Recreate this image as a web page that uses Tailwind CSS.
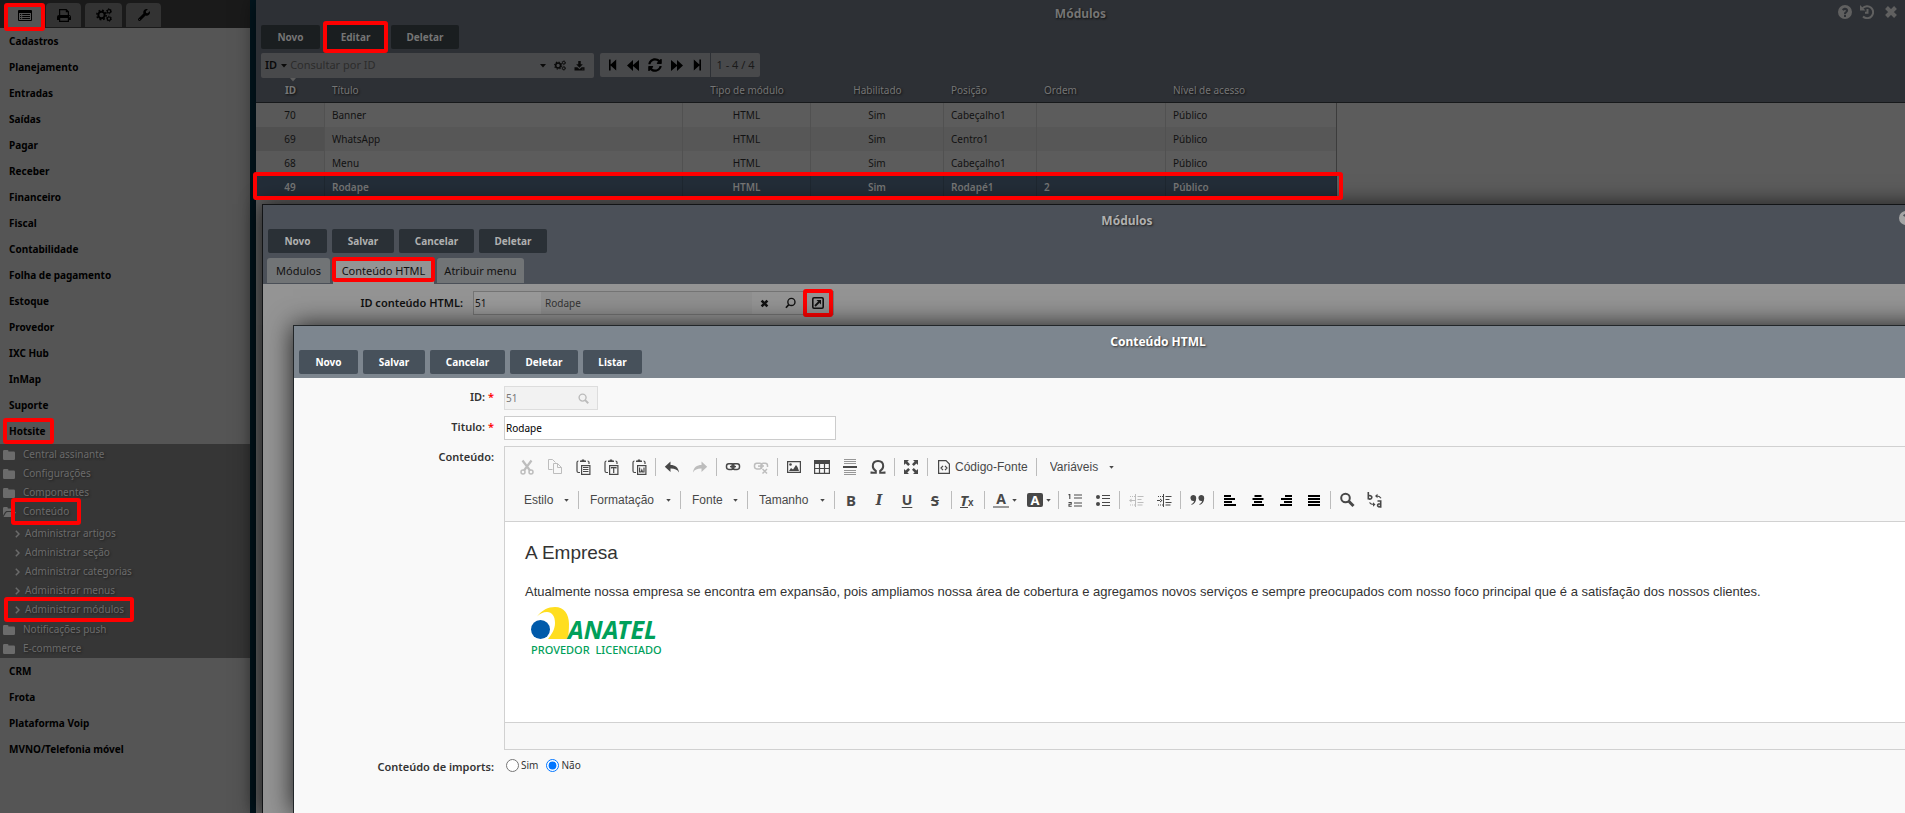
<!DOCTYPE html>
<html lang="pt-BR">
<head>
<meta charset="utf-8">
<title>Módulos</title>
<script src="https://cdn.jsdelivr.net/npm/@tailwindcss/browser@4"></script>
</head>
<body class="relative h-screen overflow-hidden bg-[#02161f] font-['Noto_Sans',sans-serif] text-[10px]">

<svg class="hidden" aria-hidden="true">
  <symbol id="caret" viewBox="0 0 6 4"><path d="M0 0h6L3 3.6z" fill="currentColor"/></symbol>
  <symbol id="list" viewBox="0 0 14 11"><path fill="currentColor" fill-rule="evenodd" d="M1 0h12a1 1 0 0 1 1 1v9a1 1 0 0 1-1 1H1a1 1 0 0 1-1-1V1a1 1 0 0 1 1-1zm0 3v7h12V3zM2 4h1.2v1H2zm2.2 0H12v1H4.200zM2 6h1.2v1H2zm2.200 0H12v1H4.200zM2 8h1.200v1H2zm2.200 0H12v1H4.200z"/></symbol>
  <symbol id="print" viewBox="0 0 14 13"><path fill="currentColor" fill-rule="evenodd" d="M2 0h7.500L12 2.500V6a2 2 0 0 1 2 2v3h-2v2H2v-2H0V8a2 2 0 0 1 2-2zm1.200 1.200V6h7.600V3.200H8.800v-2zM3.200 9v2.800h7.600V9zM12 7.300v1h1v-1z"/></symbol>
  <symbol id="cogs" viewBox="0 0 16 14"><g fill="none" stroke="currentColor">
    <circle cx="5.500" cy="7" r="3.200" stroke-width="2"/><circle cx="5.500" cy="7" r="4.700" stroke-width="1.500" stroke-dasharray="1.850 1.840"/>
    <circle cx="13" cy="3.300" r="1.700" stroke-width="1.200"/><circle cx="13" cy="3.300" r="2.500" stroke-width="1" stroke-dasharray="1.300 1.310"/>
    <circle cx="13" cy="10.700" r="1.700" stroke-width="1.200"/><circle cx="13" cy="10.700" r="2.500" stroke-width="1" stroke-dasharray="1.300 1.310"/></g></symbol>
  <symbol id="wrench" viewBox="0 0 512 512"><path fill="currentColor" d="M507.700 109.100c-2.200-9-13.500-12.100-20.100-5.500l-74.400 74.400-67.900-11.300L334 98.900l74.400-74.400c6.600-6.600 3.400-17.900-5.700-20.200-47.400-11.700-99.600.900-136.600 37.900-39.600 39.600-50.600 97.100-34.100 147.200L18.700 402.800c-25 25-25 65.500 0 90.500s65.500 25 90.500 0l213.200-213.200c50.100 16.700 107.500 5.700 147.400-34.200 37.100-37.100 49.700-89.300 37.900-136.800zM64 472c-13.300 0-24-10.700-24-24s10.700-24 24-24 24 10.700 24 24-10.700 24-24 24z"/></symbol>
  <symbol id="folder" viewBox="0 0 12 10"><path fill="currentColor" d="M0 1.200A1.200 1.200 0 0 1 1.200 0h3.200a1 1 0 0 1 1 1v.5h5.400A1.200 1.200 0 0 1 12 2.700v6a1.200 1.200 0 0 1-1.200 1.200H1.200A1.200 1.200 0 0 1 0 8.700z"/></symbol>
  <symbol id="folderopen" viewBox="0 0 13 10"><path fill="currentColor" d="M0 8.500V1.200A1.200 1.200 0 0 1 1.200 0h2.600a1 1 0 0 1 1 1v.5h4A1.200 1.200 0 0 1 10 2.700V4H4.500C3 4 2.300 4.600 1.600 5.700zM13 5l-2.300 4.200c-.3.500-.8.700-1.400.7H.5L3 5.700C3.400 5.200 4 5 4.600 5z"/></symbol>
  <symbol id="chev" viewBox="0 0 5 8"><path d="M.8.8L4 4 .8 7.200" fill="none" stroke="currentColor" stroke-width="1.500"/></symbol>
  <symbol id="download" viewBox="0 0 12 12"><path fill="currentColor" fill-rule="evenodd" d="M4.500 0h3v4H10L6 8 2 4h2.500zM0 7.500h3.500L6 10l2.500-2.500H12V11.500H0zM9.500 9.300v1h1v-1z"/></symbol>
  <symbol id="first" viewBox="0 0 10 12"><path fill="currentColor" d="M0 0h1.800v5.500L8 0v12L1.800 6.500V12H0z"/></symbol>
  <symbol id="prev" viewBox="0 0 12 11"><path fill="currentColor" d="M0 5.500L6 0v5L12 0v11L6 6v5z"/></symbol>
  <symbol id="sync" viewBox="0 0 512 512"><path fill="currentColor" d="M370.700 133.300C339.500 104 298.900 88 255.800 88c-77.500.1-144.300 53.200-162.800 126.900-1.300 5.400-6.100 9.100-11.700 9.100H24.100c-7.500 0-13.200-6.800-11.800-14.200C33.900 94.900 134.800 8 256 8c66.400 0 126.800 26.100 171.300 68.700L463 41c15.100-15.100 41-4.400 41 17v134c0 13.300-10.700 24-24 24H346c-21.400 0-32.100-25.900-17-41zM32 296h134c21.400 0 32.100 25.900 17 41l-41.800 41.800c31.300 29.300 71.800 45.300 114.900 45.300 77.400-.1 144.300-53.100 162.800-126.800 1.300-5.400 6.100-9.100 11.700-9.100h57.300c7.500 0 13.200 6.800 11.800 14.200C478.100 417.100 377.200 504 256 504c-66.400 0-126.800-26.100-171.300-68.700L49 471c-15.100 15.100-41 4.400-41-17V320c0-13.300 10.700-24 24-24z"/></symbol>
  <symbol id="help" viewBox="0 0 14 14"><path fill="currentColor" fill-rule="evenodd" d="M7 0a7 7 0 1 1 0 14A7 7 0 0 1 7 0zM6 10v2h2v-2zM4 4.600l1.500 1.100c.7-.9 2.500-1.100 2.500 0C8 6.600 6 6.500 6 8.700v.5h2c0-1.500 2.100-1.600 2.100-3.600C10.100 2.300 5.600 1.800 4 4.600z"/></symbol>
  <symbol id="history" viewBox="0 0 14 14"><path fill="none" stroke="currentColor" stroke-width="2" d="M2.600 3.200A6 6 0 1 1 3 11.500M7.500 4v3.800H5"/><path fill="currentColor" d="M0 0v5.500h5.500z"/></symbol>
  <symbol id="times" viewBox="0 0 14 14"><path d="M2.500 2.500l9 9M11.500 2.500l-9 9" stroke="currentColor" stroke-width="4" fill="none"/></symbol>
  <symbol id="mag" viewBox="0 0 12 12"><circle cx="5" cy="5" r="3.800" fill="none" stroke="currentColor" stroke-width="1.500"/><path d="M7.800 7.800l3.400 3.400" stroke="currentColor" stroke-width="2"/></symbol>
  <symbol id="magflip" viewBox="0 0 12 12"><circle cx="7" cy="4.800" r="3.900" fill="none" stroke="currentColor" stroke-width="1.500"/><path d="M4.200 7.800L1 11.200" stroke="currentColor" stroke-width="1.800"/></symbol>
  <symbol id="ext" viewBox="0 0 12 12"><rect x=".8" y=".8" width="10.400" height="10.400" rx="1.200" fill="none" stroke="currentColor" stroke-width="1.600"/><path d="M3 9l4-4" stroke="currentColor" stroke-width="1.800"/><path d="M4.500 3H9v4.500z" fill="currentColor"/></symbol>

  <symbol id="cut" viewBox="0 0 16 16"><g fill="none" stroke="currentColor"><circle cx="4" cy="13" r="2" stroke-width="1.500"/><circle cx="12" cy="13" r="2" stroke-width="1.500"/><path d="M3.500 1.500L11 11.500M12.500 1.500L5 11.500" stroke-width="2.200"/></g></symbol>
  <symbol id="copy" viewBox="0 0 16 16"><path fill="none" stroke="currentColor" d="M5.500 10.500h-4V.5h4l3 3M6.500 4.500h4l4 4v6h-8zM10.500 4.500v4h4"/></symbol>
  <symbol id="clip" viewBox="0 0 16 16"><path fill="none" stroke="currentColor" d="M5 13.500H3.500A1.500 1.500 0 0 1 2 12V3.500A1.500 1.500 0 0 1 3.500 2M12.500 2A1.500 1.500 0 0 1 14 3.500V5" stroke-width="1.200"/><path fill="currentColor" d="M5 3V1.500h1.500L7 .5h2l.5 1H11V3z"/><rect x="6.600" y="6.600" width="8.300" height="8.800" fill="none" stroke="currentColor" stroke-width="1.200"/></symbol>
  <symbol id="paste" viewBox="0 0 16 16"><use href="#clip"/><path stroke="currentColor" d="M8 8.500h5.500M8 10.500h5.500M8 12.500h5.500"/></symbol>
  <symbol id="pastet" viewBox="0 0 16 16"><use href="#clip"/><path fill="none" stroke="currentColor" d="M8.500 9.500v-.8h4.500v.8M10.700 9v5" stroke-width="1.200"/></symbol>
  <symbol id="pastew" viewBox="0 0 16 16"><use href="#clip"/><path fill="none" stroke="currentColor" d="M8.600 8.500v4.500h1.500l.7-2 .7 2H13V8.500" stroke-width="1.200"/></symbol>
  <symbol id="undo" viewBox="0 0 16 16"><path fill="currentColor" d="M6.500 2.500v3.400c4.500 0 8 2.300 8.500 7.600-1.800-2.900-4.500-4-8.500-3.900V13L.8 7.800z"/></symbol>
  <symbol id="redo" viewBox="0 0 16 16"><path fill="currentColor" d="M9.500 2.500v3.400c-4.500 0-8 2.300-8.500 7.600 1.800-2.900 4.500-4 8.500-3.900V13l5.700-5.200z"/></symbol>
  <symbol id="link" viewBox="0 0 16 16"><g fill="none" stroke="currentColor" stroke-width="1.500"><rect x="1.500" y="4.800" width="7.500" height="5.600" rx="2.300"/><rect x="7" y="4.800" width="7.500" height="5.600" rx="2.300"/></g><path d="M5 7.600h6" stroke="currentColor" stroke-width="1.400"/></symbol>
  <symbol id="unlink" viewBox="0 0 16 16"><g fill="none" stroke="currentColor" stroke-width="1.500"><rect x="1.500" y="4.300" width="7.500" height="5.600" rx="2.300"/><path d="M8 9.900V6.600a2.300 2.300 0 0 1 2.300-2.300h1.900a2.300 2.300 0 0 1 2.300 2.300V8"/><path d="M5 7.100h6"/><path d="M9.500 10l4.500 4.500M14 10l-4.500 4.500"/></g></symbol>
  <symbol id="image" viewBox="0 0 16 16"><path fill="currentColor" fill-rule="evenodd" d="M1 2h14v12H1zm1.200 1.200v9.600h11.600V3.200z"/><circle cx="4.500" cy="5.500" r="1.300" fill="currentColor"/><path fill="currentColor" d="M3 12l2-3 2 1.500L10 6l1.500 2L13 12z"/></symbol>
  <symbol id="table" viewBox="0 0 16 16"><path fill="currentColor" d="M0 1h16v4H0z"/><path fill="none" stroke="currentColor" stroke-width="1.200" d="M.6 4v10.400h14.800V4M0 9.500h16M5.500 4v10.400M10.500 4v10.400"/></symbol>
  <symbol id="hr" viewBox="0 0 16 16"><path stroke="currentColor" opacity=".55" d="M2 .5h12M2 2.500h12M2 4.500h12M2 11.500h12M2 13.500h12M2 15.500h12"/><path stroke="currentColor" stroke-width="2" d="M1 8h14"/></symbol>
  <symbol id="omega" viewBox="0 0 16 16"><path fill="none" stroke="currentColor" stroke-width="2" d="M1.500 12.500v1.200h4.300v-1.800C3.600 10.600 2.800 9 2.800 7c0-3 2-5 5.200-5s5.200 2 5.200 5c0 2-.8 3.600-3 4.900v1.800h4.300v-1.200"/></symbol>
  <symbol id="max" viewBox="0 0 16 16"><path fill="currentColor" d="M1 1h5L4.400 2.600 7 5.200 5.200 7 2.600 4.400 1 6zM15 1h-5l1.600 1.600L9 5.200 10.800 7l2.600-2.600L15 6zM1 15h5l-1.600-1.600L7 10.800 5.200 9l-2.600 2.600L1 10zM15 15h-5l1.600-1.600L9 10.800 10.800 9l2.600 2.600L15 10z"/></symbol>
  <symbol id="source" viewBox="0 0 16 16"><path fill="none" stroke="currentColor" stroke-width="1.200" d="M2.600 1.600h7.400l3.400 3.400v9.400H2.600zM7 6.800L5 9l2 2.200M9 6.800L11 9l-2 2.200"/></symbol>
  <symbol id="ol" viewBox="0 0 16 16"><path stroke="currentColor" stroke-width="1.200" d="M7 3h8M7 6h8M7 11h8M7 14h8"/><path fill="none" stroke="currentColor" stroke-width="1.100" d="M1.500 2.600h1.300V7M1.500 10.500h2.700v1.700H2v2h2.700"/></symbol>
  <symbol id="ul" viewBox="0 0 16 16"><path stroke="currentColor" stroke-width="1.200" d="M7 3.500h8M7 6.500h8M7 10.500h8M7 13.500h8"/><circle cx="3" cy="5" r="2" fill="currentColor"/><circle cx="3" cy="12" r="2" fill="currentColor"/></symbol>
  <symbol id="outdent" viewBox="0 0 16 16"><path stroke="currentColor" d="M7.500 2v13M9.500 4.500h6M9.500 7.500h4M9.500 10.500h6M9.500 13h5"/><path stroke="currentColor" stroke-dasharray="1 1" d="M2 4.500h5M2 13h5"/><path fill="currentColor" d="M3.500 6.500v4L1 8.500zM3 8h4v1H3z"/></symbol>
  <symbol id="indent" viewBox="0 0 16 16"><path stroke="currentColor" d="M7.500 2v13M9.500 4.500h6M9.500 7.500h4M9.500 10.500h6M9.500 13h5"/><path stroke="currentColor" stroke-dasharray="1 1" d="M2 4.500h5M2 13h5"/><path fill="currentColor" d="M4 6.500v4l2.500-2zM1 8h4v1H1z"/></symbol>
  <symbol id="quote" viewBox="0 0 16 16"><path fill="currentColor" d="M4 3a3 3 0 0 1 3.200 3.200C7.200 9.500 5.500 12 2.500 13v-1c1.500-.8 2.300-1.700 2.500-3a3 3 0 1 1-1-6zM12 3a3 3 0 0 1 3.200 3.200c0 3.300-1.700 5.800-4.700 6.800v-1c1.500-.8 2.300-1.700 2.500-3a3 3 0 1 1-1-6z"/></symbol>
  <symbol id="al" viewBox="0 0 16 16"><path stroke="#000" stroke-width="2" d="M2 4h7M2 7h11M2 10h8M2 13h12"/></symbol>
  <symbol id="ac" viewBox="0 0 16 16"><path stroke="#000" stroke-width="2" d="M4.500 4h7M2.500 7h11M4 10h8M2 13h12"/></symbol>
  <symbol id="ar" viewBox="0 0 16 16"><path stroke="#000" stroke-width="2" d="M7 4h7M3 7h11M6 10h8M2 13h12"/></symbol>
  <symbol id="aj" viewBox="0 0 16 16"><path stroke="#000" stroke-width="2" d="M2 4h12M2 7h12M2 10h12M2 13h12"/></symbol>
  <symbol id="find" viewBox="0 0 16 16"><circle cx="6.500" cy="6" r="4.300" fill="none" stroke="currentColor" stroke-width="2"/><path d="M9.800 9.300l4.700 4.700" stroke="currentColor" stroke-width="3"/></symbol>
  <symbol id="replace" viewBox="0 0 16 16"><g fill="none" stroke="currentColor" stroke-width="1.600"><path d="M1.300 0v7.500M1.300 4.200a2 1.700 0 1 1 0 2.200"/><path d="M10.500 9h3.200v6.800M13.700 12h-2.200a1.600 1.500 0 1 0 2.200 1.800"/><path d="M9.500 4c2 0 3.500.6 4.500 2.200M2.500 10.500c.8 1.500 2.300 2 4.500 2" stroke-width="1.200"/></g><path fill="currentColor" d="M10.500 1.800v4.400L8 4zM6 10.300v4.400l2.500-2.200z"/></symbol>
</svg>

<div class="flex h-full">
  <!-- Sidebar -->
  <nav aria-label="Menu principal" class="h-full w-[250px] shrink-0 bg-[#555] text-black">
    <div class="flex h-7 items-end gap-1 bg-[#1a1a1a] pl-2 text-black">
      <button aria-label="Menus" class="relative mr-px flex h-[25px] w-[33px] items-center justify-center bg-[#555]"><svg class="h-[11px] w-[14px]"><use href="#list"/></svg><span class="absolute -inset-x-1 top-0 -bottom-[3px] rounded-[3px] border-4 border-[#ff0000]"></span></button>
      <button aria-label="Relatórios" class="mb-px flex h-6 w-[35px] items-center justify-center rounded-t-[4px] bg-[#333]"><svg class="h-[13px] w-[14px]"><use href="#print"/></svg></button>
      <button aria-label="Sistema" class="mb-px flex h-6 w-[37px] items-center justify-center rounded-t-[4px] bg-[#333]"><svg class="h-[14px] w-4"><use href="#cogs"/></svg></button>
      <button aria-label="Ferramentas" class="mb-px flex h-6 w-[35px] items-center justify-center rounded-t-[4px] bg-[#333]"><svg class="h-3 w-3"><use href="#wrench"/></svg></button>
    </div>
    <ul class="font-bold leading-[26px]">
      <li><a href="#" class="block pl-[9px]">Cadastros</a></li>
      <li><a href="#" class="block pl-[9px]">Planejamento</a></li>
      <li><a href="#" class="block pl-[9px]">Entradas</a></li>
      <li><a href="#" class="block pl-[9px]">Saídas</a></li>
      <li><a href="#" class="block pl-[9px]">Pagar</a></li>
      <li><a href="#" class="block pl-[9px]">Receber</a></li>
      <li><a href="#" class="block pl-[9px]">Financeiro</a></li>
      <li><a href="#" class="block pl-[9px]">Fiscal</a></li>
      <li><a href="#" class="block pl-[9px]">Contabilidade</a></li>
      <li><a href="#" class="block pl-[9px]">Folha de pagamento</a></li>
      <li><a href="#" class="block pl-[9px]">Estoque</a></li>
      <li><a href="#" class="block pl-[9px]">Provedor</a></li>
      <li><a href="#" class="block pl-[9px]">IXC Hub</a></li>
      <li><a href="#" class="block pl-[9px]">InMap</a></li>
      <li><a href="#" class="block pl-[9px]">Suporte</a></li>
      <li>
        <a href="#" class="block pl-[9px]"><span class="relative inline-block">Hotsite<span class="absolute -right-2 -left-[6px] inset-y-0 rounded-[3px] border-4 border-[#ff0000]"></span></span></a>
        <ul class="bg-[#363636] pt-px font-normal leading-[19px] text-[#6b6b6b] [text-shadow:1px_1px_2px_#222]">
          <li><a href="#" class="flex items-center gap-2 pl-[3px]"><svg class="h-[10px] w-3"><use href="#folder"/></svg>Central assinante</a></li>
          <li><a href="#" class="flex items-center gap-2 pl-[3px]"><svg class="h-[10px] w-3"><use href="#folder"/></svg>Configurações</a></li>
          <li><a href="#" class="flex items-center gap-2 pl-[3px]"><svg class="h-[10px] w-3"><use href="#folder"/></svg>Componentes</a></li>
          <li><a href="#" class="flex items-center gap-[7px] pl-[3px]"><svg class="h-[10px] w-[13px]"><use href="#folderopen"/></svg><span class="relative">Conteúdo<span class="absolute -inset-x-3 -inset-y-1 rounded-[3px] border-4 border-[#ff0000]"></span></span></a>
            <ul class="pt-[3px] pb-px pl-[15px]">
              <li><a href="#" class="flex items-center gap-[5px]"><svg class="h-2 w-[5px]"><use href="#chev"/></svg>Administrar artigos</a></li>
              <li><a href="#" class="flex items-center gap-[5px]"><svg class="h-2 w-[5px]"><use href="#chev"/></svg>Administrar seção</a></li>
              <li><a href="#" class="flex items-center gap-[5px]"><svg class="h-2 w-[5px]"><use href="#chev"/></svg>Administrar categorias</a></li>
              <li><a href="#" class="flex items-center gap-[5px]"><svg class="h-2 w-[5px]"><use href="#chev"/></svg>Administrar menus</a></li>
              <li class="flex"><a href="#" class="relative flex items-center gap-[5px]"><svg class="h-2 w-[5px]"><use href="#chev"/></svg>Administrar módulos<span class="absolute -right-[10px] -left-[11px] -inset-y-[3px] rounded-[3px] border-4 border-[#ff0000]"></span></a></li>
            </ul>
          </li>
          <li><a href="#" class="flex items-center gap-2 pl-[3px]"><svg class="h-[10px] w-3"><use href="#folder"/></svg>Notificações push</a></li>
          <li><a href="#" class="flex items-center gap-2 pl-[3px]"><svg class="h-[10px] w-3"><use href="#folder"/></svg>E-commerce</a></li>
        </ul>
      </li>
      <li><a href="#" class="block pl-[9px]">CRM</a></li>
      <li><a href="#" class="block pl-[9px]">Frota</a></li>
      <li><a href="#" class="block pl-[9px]">Plataforma Voip</a></li>
      <li><a href="#" class="block pl-[9px]">MVNO/Telefonia móvel</a></li>
    </ul>
  </nav>

  <!-- Window: module list -->
  <section class="ml-[6px] min-w-0 flex-1 bg-[#5c5c5c] text-[#121212] shadow-[0_0_20px_rgba(0,0,0,0.600)]">
    <header class="bg-[#2d3035] text-[#757575]">
      <div class="relative flex h-[25px] items-center justify-center pt-[2px]">
        <h1 class="text-xs font-bold [text-shadow:1px_1px_2px_#111]">Módulos</h1>
        <div class="absolute top-[5px] right-[7px] flex gap-2 text-[#606060]">
          <button aria-label="Ajuda"><svg class="h-[14px] w-[14px]"><use href="#help"/></svg></button>
          <button aria-label="Histórico"><svg class="h-[14px] w-[14px]"><use href="#history"/></svg></button>
          <button aria-label="Fechar"><svg class="ml-[2px] h-[14px] w-[14px]"><use href="#times"/></svg></button>
        </div>
      </div>
      <div class="flex gap-[5px] pl-[5px] font-bold">
        <button class="h-6 w-[59px] rounded-[2px] bg-[#1a1e20]">Novo</button>
        <button class="relative h-6 w-[61px] rounded-[2px] bg-[#1a1e20]">Editar<span class="absolute -inset-x-[2px] -inset-y-1 rounded-[3px] border-4 border-[#ff0000]"></span></button>
        <button class="h-6 w-[68px] rounded-[2px] bg-[#1a1e20]">Deletar</button>
      </div>
      <div class="flex gap-[6px] pt-1 pl-[5px] text-[11px] text-[#0a0a0a]">
        <div class="flex h-[25px] w-[333px] items-center rounded-[2px] bg-[#48494b] pr-[9px] pl-1">
          <button class="flex items-center gap-1 font-semibold">ID <svg class="h-1 w-[6px]"><use href="#caret"/></svg></button>
          <input type="text" aria-label="Consultar por ID" placeholder="Consultar por ID" class="ml-[3px] min-w-0 flex-1 bg-transparent outline-none placeholder:text-[#2c2c2c]">
          <div class="flex items-center gap-2">
            <button aria-label="Mais campos"><svg class="h-1 w-[6px]"><use href="#caret"/></svg></button>
            <button aria-label="Configurar"><svg class="h-[11px] w-3"><use href="#cogs"/></svg></button>
            <button aria-label="Exportar"><svg class="h-[10px] w-[11px]"><use href="#download"/></svg></button>
          </div>
        </div>
        <div class="flex h-6 items-center rounded-[2px] bg-[#48494b] text-black">
          <div class="flex h-6 w-[111px] items-center gap-[9px] border-r border-[#2d3035] pl-[9px]">
            <button aria-label="Primeira"><svg class="h-3 w-[9px]"><use href="#first"/></svg></button>
            <button aria-label="Anterior"><svg class="h-[11px] w-3"><use href="#prev"/></svg></button>
            <button aria-label="Atualizar"><svg class="h-[14px] w-[14px]"><use href="#sync"/></svg></button>
            <button aria-label="Próxima"><svg class="h-[11px] w-3 rotate-180"><use href="#prev"/></svg></button>
            <button aria-label="Última"><svg class="h-3 w-[9px] rotate-180"><use href="#first"/></svg></button>
          </div>
          <span class="w-[49px] text-center text-[#1a1a1a]">1 - 4 / 4</span>
        </div>
      </div>
    </header>
    <table class="w-full table-fixed border-separate border-spacing-0 text-left">
      <colgroup><col class="w-[69px]"><col class="w-[358px]"><col class="w-32"><col class="w-[133px]"><col class="w-[93px]"><col class="w-[129px]"><col class="w-[171px]"><col></colgroup>
      <thead class="bg-[#2d3035] text-[#757575] [text-shadow:1px_1px_2px_#111]">
        <tr class="h-[25px] [&>th]:border-b [&>th]:border-[#17191b] [&>th]:pl-[7px] [&>th]:font-normal">
          <th class="relative pl-0! text-center font-bold!">ID<svg class="absolute top-0 left-[33px] h-1 w-2 text-[#5c5c5c]"><use href="#caret"/></svg></th>
          <th>Título</th><th class="pl-0! text-center">Tipo de módulo</th><th class="pl-0! text-center">Habilitado</th><th>Posição</th><th>Ordem</th><th>Nível de acesso</th><th></th>
        </tr>
      </thead>
      <tbody class="[&_td]:h-6 [&_td]:border-r [&_td]:border-[#515151] [&_td]:p-0 [&_td]:pl-[7px] [&_td:last-child]:border-0">
        <tr><td class="bg-[#595959] pl-0! text-center">70</td><td>Banner</td><td class="pl-0! text-center">HTML</td><td class="pl-0! text-center">Sim</td><td>Cabeçalho1</td><td></td><td class="border-[#3c3c3c]!">Público</td><td></td></tr>
        <tr class="bg-[#575757]"><td class="bg-[#505050] pl-0! text-center">69</td><td>WhatsApp</td><td class="pl-0! text-center">HTML</td><td class="pl-0! text-center">Sim</td><td>Centro1</td><td></td><td class="border-[#3c3c3c]!">Público</td><td class="bg-[#5c5c5c]"></td></tr>
        <tr><td class="bg-[#595959] pl-0! text-center">68</td><td>Menu</td><td class="pl-0! text-center">HTML</td><td class="pl-0! text-center">Sim</td><td>Cabeçalho1</td><td></td><td class="border-[#3c3c3c]!">Público</td><td></td></tr>
        <tr class="bg-[#232d38] font-semibold text-[#757575] [&>td]:border-[#1e2730]!"><td class="relative pl-0! text-center">49<span class="absolute -top-[3px] -left-[3px] z-10 h-7 w-[1090px] rounded-[3px] border-4 border-[#ff0000]"></span></td><td>Rodape</td><td class="pl-0! text-center">HTML</td><td class="pl-0! text-center">Sim</td><td>Rodapé1</td><td>2</td><td>Público</td><td class="bg-[#5c5c5c]"></td></tr>
      </tbody>
    </table>
  </section>
</div>

<!-- Window: module form -->
<section class="absolute top-[204px] bottom-0 left-[262px] w-[1730px] border border-b-0 border-[#121416] bg-[#949494] text-[#111] shadow-[0_0_20px_rgba(0,0,0,0.700)]">
  <header class="bg-[#4b5058]">
    <div class="relative flex h-6 items-center justify-center pt-2">
      <h2 class="text-xs font-bold text-[#b0b0b0] [text-shadow:1px_1px_2px_#222]">Módulos</h2>
      <button aria-label="Ajuda" class="absolute top-[6px] right-[78px] text-[#a5a5a5]"><svg class="h-[14px] w-[14px]"><use href="#help"/></svg></button>
    </div>
    <div class="flex gap-[5px] pl-[5px] font-bold text-[#b0b0b0]">
      <button class="h-6 w-[59px] rounded-[2px] bg-[#2a3036]">Novo</button>
      <button class="h-6 w-[62px] rounded-[2px] bg-[#2a3036]">Salvar</button>
      <button class="h-6 w-[75px] rounded-[2px] bg-[#2a3036]">Cancelar</button>
      <button class="h-6 w-[68px] rounded-[2px] bg-[#2a3036]">Deletar</button>
    </div>
    <div role="tablist" class="flex gap-[3px] pt-[5px] pl-1 text-[11px]">
      <button role="tab" class="h-[25px] w-[63px] rounded-t-[3px] bg-[#717476] pt-px">Módulos</button>
      <button role="tab" aria-selected="true" class="relative h-[26px] w-[101px] bg-[#949494]">Conteúdo HTML<span class="absolute -inset-x-px -top-px bottom-[2px] rounded-[3px] border-4 border-[#ff0000]"></span></button>
      <button role="tab" class="h-[25px] w-[87px] rounded-t-[3px] bg-[#717476] pt-px">Atribuir menu</button>
    </div>
  </header>
  <div class="grid grid-cols-[200px_1fr] items-center gap-x-[10px] pt-[7px]">
    <label for="idc" class="text-right text-[11px] leading-[22px] font-semibold">ID conteúdo HTML:</label>
    <div class="flex h-6 w-[361px] items-center border border-[#757575] pr-[9px]">
      <input id="idc" type="text" value="51" class="h-full w-[67px] bg-[#999] pl-px outline-none">
      <input type="text" aria-label="Conteúdo" value="Rodape" class="h-full min-w-0 flex-1 bg-[#8f8f8f] pl-1 text-[#333] outline-none">
      <div class="flex items-center gap-4 pl-2">
        <button aria-label="Limpar"><svg class="h-[9px] w-[9px]"><use href="#times"/></svg></button>
        <button aria-label="Buscar"><svg class="h-3 w-[11px]"><use href="#magflip"/></svg></button>
        <button aria-label="Abrir" class="relative"><svg class="h-3 w-3"><use href="#ext"/></svg><span class="absolute -inset-x-[9px] -inset-y-2 rounded-[3px] border-4 border-[#ff0000]"></span></button>
      </div>
    </div>
  </div>
</section>

<!-- Window: HTML content form -->
<section class="absolute top-[325px] bottom-0 left-[293px] w-[1730px] border border-b-0 border-[#222629] bg-[#f9f9f9] text-[#333] shadow-[0_0_24px_rgba(0,0,0,0.800)]">
  <header class="bg-[#7d868f] pb-1">
    <div class="flex h-6 items-center justify-center pt-2">
      <h2 class="text-xs font-bold text-white [text-shadow:1px_1px_2px_#333]">Conteúdo HTML</h2>
    </div>
    <div class="flex gap-[5px] pl-[5px] font-bold text-white">
      <button class="h-6 w-[59px] rounded-[2px] bg-[#47515b]">Novo</button>
      <button class="h-6 w-[62px] rounded-[2px] bg-[#47515b]">Salvar</button>
      <button class="h-6 w-[75px] rounded-[2px] bg-[#47515b]">Cancelar</button>
      <button class="h-6 w-[68px] rounded-[2px] bg-[#47515b]">Deletar</button>
      <button class="h-6 w-[59px] rounded-[2px] bg-[#47515b]">Listar</button>
    </div>
  </header>
  <form class="grid grid-cols-[200px_1fr] items-start gap-x-[10px] gap-y-[6px] pt-2">
    <label for="fid" class="text-right text-[11px] leading-[22px] font-semibold">ID: <span class="text-[#ff0000]">*</span></label>
    <div class="flex h-6 w-[94px] items-center border border-[#ddd] bg-[#f2f2f2] pr-2">
      <input id="fid" type="text" value="51" disabled class="min-w-0 flex-1 pl-px text-[#777]">
      <svg class="h-[11px] w-[11px] text-[#bbb]"><use href="#mag"/></svg>
    </div>
    <label for="ftit" class="text-right text-[11px] leading-[22px] font-semibold">Titulo: <span class="text-[#ff0000]">*</span></label>
    <input id="ftit" type="text" value="Rodape" class="h-6 w-[332px] border border-[#ccc] bg-white pl-px text-black outline-none">
    <span class="text-right text-[11px] leading-[22px] font-semibold">Conteúdo:</span>
    <div class="border border-[#d1d1d1] bg-white">
      <div class="flex flex-col gap-[5px] border-b border-[#d1d1d1] bg-[#f8f8f8] pt-[6px] pb-[7px] pl-2 font-['Liberation_Sans',Arial,sans-serif] text-xs text-[#484848]">
        <div class="flex h-7 items-center [&>button]:px-[6px] [&_svg]:block">
          <button type="button" aria-label="Recortar" class="text-[#bdbdbd]"><svg class="h-4 w-4"><use href="#cut"/></svg></button>
          <button type="button" aria-label="Copiar" class="text-[#bdbdbd]"><svg class="h-4 w-4"><use href="#copy"/></svg></button>
          <button type="button" aria-label="Colar"><svg class="h-4 w-4"><use href="#paste"/></svg></button>
          <button type="button" aria-label="Colar como texto"><svg class="h-4 w-4"><use href="#pastet"/></svg></button>
          <button type="button" aria-label="Colar do Word"><svg class="h-4 w-4"><use href="#pastew"/></svg></button>
          <span class="mx-[2px] h-[18px] w-px bg-[#bcbcbc]"></span>
          <button type="button" aria-label="Desfazer"><svg class="h-4 w-4"><use href="#undo"/></svg></button>
          <button type="button" aria-label="Refazer" class="text-[#bdbdbd]"><svg class="h-4 w-4"><use href="#redo"/></svg></button>
          <span class="mx-[2px] h-[18px] w-px bg-[#bcbcbc]"></span>
          <button type="button" aria-label="Link"><svg class="h-4 w-4"><use href="#link"/></svg></button>
          <button type="button" aria-label="Remover link" class="text-[#bdbdbd]"><svg class="h-4 w-4"><use href="#unlink"/></svg></button>
          <span class="mx-[2px] h-[18px] w-px bg-[#bcbcbc]"></span>
          <button type="button" aria-label="Imagem"><svg class="h-4 w-4"><use href="#image"/></svg></button>
          <button type="button" aria-label="Tabela"><svg class="h-4 w-4"><use href="#table"/></svg></button>
          <button type="button" aria-label="Linha horizontal"><svg class="h-4 w-4"><use href="#hr"/></svg></button>
          <button type="button" aria-label="Caractere especial"><svg class="h-4 w-4"><use href="#omega"/></svg></button>
          <span class="mx-[2px] h-[18px] w-px bg-[#bcbcbc]"></span>
          <button type="button" aria-label="Maximizar"><svg class="h-4 w-4"><use href="#max"/></svg></button>
          <span class="mx-[2px] h-[18px] w-px bg-[#bcbcbc]"></span>
          <button type="button" class="flex items-center gap-[3px]"><svg class="h-4 w-4"><use href="#source"/></svg>Código-Fonte</button>
          <span class="mx-[2px] h-[18px] w-px bg-[#bcbcbc]"></span>
          <label class="flex items-center gap-[10px] pr-[7px] pl-[11px]"><select aria-label="Variáveis" class="appearance-none outline-none"><option>Variáveis</option></select><svg class="h-[3px] w-[5px]"><use href="#caret"/></svg></label>
        </div>
        <div class="flex h-7 items-center [&>button]:px-[6px] [&_svg]:block">
          <label class="flex items-center gap-[10px] pr-[7px] pl-[11px]"><select aria-label="Estilo" class="appearance-none outline-none"><option>Estilo</option></select><svg class="h-[3px] w-[5px]"><use href="#caret"/></svg></label>
          <span class="mx-[2px] h-[18px] w-px bg-[#bcbcbc]"></span>
          <label class="flex items-center gap-[11px] pr-[7px] pl-[9px]"><select aria-label="Formatação" class="appearance-none outline-none"><option>Formatação</option></select><svg class="h-[3px] w-[5px]"><use href="#caret"/></svg></label>
          <span class="mx-[2px] h-[18px] w-px bg-[#bcbcbc]"></span>
          <label class="flex items-center gap-[10px] pr-[7px] pl-[9px]"><select aria-label="Fonte" class="appearance-none outline-none"><option>Fonte</option></select><svg class="h-[3px] w-[5px]"><use href="#caret"/></svg></label>
          <span class="mx-[2px] h-[18px] w-px bg-[#bcbcbc]"></span>
          <label class="flex items-center gap-[11px] pr-[7px] pl-[9px]"><select aria-label="Tamanho" class="appearance-none outline-none"><option>Tamanho</option></select><svg class="h-[3px] w-[5px]"><use href="#caret"/></svg></label>
          <span class="mx-[2px] h-[18px] w-px bg-[#bcbcbc]"></span>
          <button type="button" aria-label="Negrito" class="font-['Noto_Sans',sans-serif] text-[15px] leading-4 font-bold"><span class="block w-4">B</span></button>
          <button type="button" aria-label="Itálico" class="font-['DejaVu_Serif',serif] text-sm leading-4 font-bold italic"><span class="block w-4">I</span></button>
          <button type="button" aria-label="Sublinhado" class="font-['Noto_Sans',sans-serif] text-sm leading-4 font-bold"><span class="block w-4 underline underline-offset-2">U</span></button>
          <button type="button" aria-label="Tachado" class="font-['Noto_Sans',sans-serif] text-[15px] leading-4 font-bold"><span class="block w-4 line-through">S</span></button>
          <span class="mx-[2px] h-[18px] w-px bg-[#bcbcbc]"></span>
          <button type="button" aria-label="Remover formatação" class="text-[15px] leading-4 font-bold"><span class="flex w-4 items-end"><span class="font-['Noto_Sans',sans-serif] italic underline">T</span><span class="text-[10px] leading-[10px]">x</span></span></button>
          <span class="mx-[2px] h-[18px] w-px bg-[#bcbcbc]"></span>
          <button type="button" aria-label="Cor do texto" class="flex items-center gap-[3px] pr-[4px]!"><span class="flex h-4 w-4 items-center justify-center border-b-2 border-[#999] font-['Noto_Sans',sans-serif] text-sm leading-4 font-bold">A</span><svg class="h-[3px] w-[5px]"><use href="#caret"/></svg></button>
          <button type="button" aria-label="Cor de fundo" class="flex items-center gap-[3px] pr-[5px]!"><span class="flex h-[14px] w-4 items-center justify-center rounded-[2px] bg-[#484848] font-['Noto_Sans',sans-serif] text-[13px] leading-[14px] font-bold text-white">A</span><svg class="h-[3px] w-[5px]"><use href="#caret"/></svg></button>
          <span class="mx-[2px] h-[18px] w-px bg-[#bcbcbc]"></span>
          <button type="button" aria-label="Lista numerada"><svg class="h-4 w-4"><use href="#ol"/></svg></button>
          <button type="button" aria-label="Lista"><svg class="h-4 w-4"><use href="#ul"/></svg></button>
          <span class="mx-[2px] h-[18px] w-px bg-[#bcbcbc]"></span>
          <button type="button" aria-label="Diminuir recuo" class="text-[#bdbdbd]"><svg class="h-4 w-4"><use href="#outdent"/></svg></button>
          <button type="button" aria-label="Aumentar recuo"><svg class="h-4 w-4"><use href="#indent"/></svg></button>
          <span class="mx-[2px] h-[18px] w-px bg-[#bcbcbc]"></span>
          <button type="button" aria-label="Citação"><svg class="h-4 w-4"><use href="#quote"/></svg></button>
          <span class="mx-[2px] h-[18px] w-px bg-[#bcbcbc]"></span>
          <button type="button" aria-label="Alinhar à esquerda"><svg class="h-4 w-4"><use href="#al"/></svg></button>
          <button type="button" aria-label="Centralizar"><svg class="h-4 w-4"><use href="#ac"/></svg></button>
          <button type="button" aria-label="Alinhar à direita"><svg class="h-4 w-4"><use href="#ar"/></svg></button>
          <button type="button" aria-label="Justificar"><svg class="h-4 w-4"><use href="#aj"/></svg></button>
          <span class="mx-[2px] h-[18px] w-px bg-[#bcbcbc]"></span>
          <button type="button" aria-label="Localizar"><svg class="h-4 w-4"><use href="#find"/></svg></button>
          <button type="button" aria-label="Substituir"><svg class="h-4 w-4"><use href="#replace"/></svg></button>
        </div>
      </div>
      <div class="h-[200px] px-5 pt-[19px] font-['Liberation_Sans',Arial,sans-serif] text-[13px] text-[#333]">
        <h3 class="text-[19px] leading-6">A Empresa</h3>
        <p class="mt-[17px] leading-5">Atualmente nossa empresa se encontra em expansão, pois ampliamos nossa área de cobertura e agregamos novos serviços e sempre preocupados com nosso foco principal que é a satisfação dos nossos clientes.</p>
        <svg class="mt-[3px] h-[52px] w-[140px] font-['Noto_Sans',sans-serif]" viewBox="0 0 140 52" role="img" aria-label="Anatel provedor licenciado">
          <path fill="#ffde1f" d="M12 11.500C17 5 23 2 30 2c9 0 14 7 14 17 0 6-.5 11-1.500 15H23c4-5 7-10 7-16 0-7-3-11-8-11-4 0-7 1.500-10 4.500z"/>
          <circle cx="15.500" cy="24.500" r="9.500" fill="#005aaa"/>
          <text x="43" y="34" fill="#00a05a" font-size="25" font-weight="700" font-style="italic">ANATEL</text>
          <text x="6" y="49" fill="#00a05a" font-size="11" font-weight="500" xml:space="preserve">PROVEDOR  LICENCIADO</text>
        </svg>
      </div>
      <div class="h-[27px] border-t border-[#d1d1d1] bg-[#f8f8f8]"></div>
    </div>
    <span class="text-right text-[11px] leading-[22px] font-semibold">Conteúdo de imports:</span>
    <div class="flex h-[18px] items-center gap-2 pl-[2px]">
      <label class="flex items-center gap-[2px]"><input type="radio" name="imp" class="h-[13px] w-[13px]">Sim</label>
      <label class="flex items-center gap-[2px]"><input type="radio" name="imp" checked class="h-[13px] w-[13px]">Não</label>
    </div>
  </form>
</section>
</body>
</html>
